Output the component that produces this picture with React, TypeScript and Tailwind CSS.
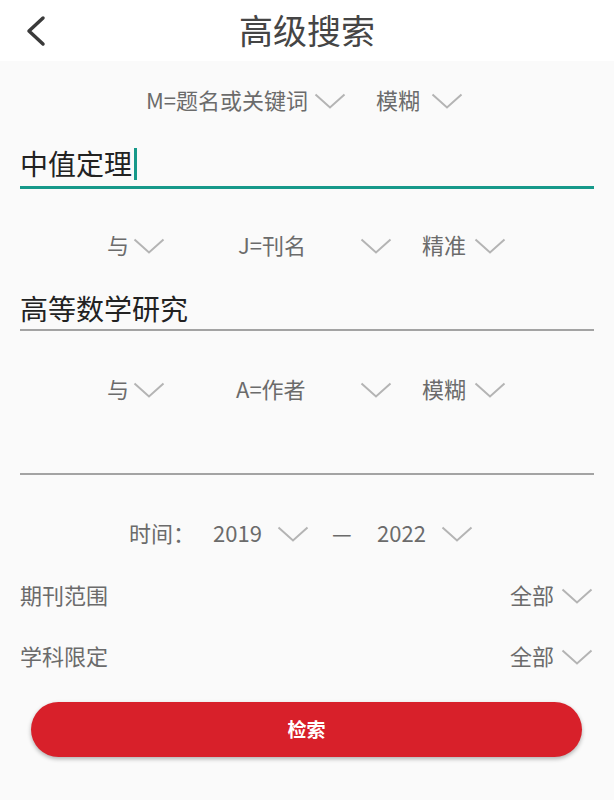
import React from "react";

const FONT = { fontFamily: '"Noto Sans CJK SC", "Noto Sans", sans-serif' };

function Chevron() {
  return (
    <svg width="32" height="16" viewBox="0 0 32 16" className="shrink-0">
      <polyline points="1.5,1.5 16,14.5 30.5,1.5" fill="none" stroke="#b4b4b4" strokeWidth="2" />
    </svg>
  );
}

export default function App() {
  return (
    <div className="w-[614px] h-[800px] bg-[#fafafa] flex flex-col" style={FONT}>
      {/* header */}
      <div className="h-[61px] bg-white flex items-center relative shrink-0">
        <svg width="24" height="34" viewBox="0 0 24 34" className="ml-[24px]">
          <polyline points="19,4 5,17 19,30" fill="none" stroke="#3a3a3a" strokeWidth="3.5" strokeLinecap="round" strokeLinejoin="round" />
        </svg>
        <div className="absolute left-0 right-0 top-0 h-[61px] pb-[2px] flex items-center justify-center text-[34px] text-[#454545] leading-none pointer-events-none">
          高级搜索
        </div>
      </div>

      {/* row 1 */}
      <div className="mt-[20px] h-[40px] flex items-center pl-[146px] text-[22px] text-[#6b6b6b] leading-none">
        <div className="w-[168px] pb-[4px]">M=题名或关键词</div>
        <Chevron />
        <div className="ml-[30px] w-[55px] pb-[4px]">模糊</div>
        <Chevron />
      </div>

      {/* input 1 */}
      <div className="mx-[20px] h-[68px] border-b-[3px] border-[#16998a] flex items-end pb-[2px]">
        <div className="h-[40px] flex items-center text-[28px] text-[#222] leading-none">
          <span className="pb-[3px]">中值定理</span>
          <span className="ml-[2px] w-[3px] h-[32px] bg-[#16998a]" />
        </div>
      </div>

      {/* row 2 */}
      <div className="mt-[37px] h-[40px] flex items-center pl-[107px] text-[22px] text-[#6b6b6b] leading-none">
        <div className="w-[26px] pb-[4px]">与</div>
        <Chevron />
        <div className="ml-[73px] w-[122px] pb-[4px]">J=刊名</div>
        <Chevron />
        <div className="ml-[30px] w-[52px] pb-[4px]">精准</div>
        <Chevron />
      </div>

      {/* input 2 */}
      <div className="mx-[20px] h-[65px] border-b-[2px] border-[#a3a3a3] flex items-end">
        <div className="h-[40px] pb-[3px] flex items-center text-[28px] text-[#222] leading-none">高等数学研究</div>
      </div>

      {/* row 3 */}
      <div className="mt-[39px] h-[40px] flex items-center pl-[107px] text-[22px] text-[#6b6b6b] leading-none">
        <div className="w-[26px] pb-[4px]">与</div>
        <Chevron />
        <div className="ml-[71px] w-[124px] pb-[4px]">A=作者</div>
        <Chevron />
        <div className="ml-[30px] w-[52px] pb-[4px]">模糊</div>
        <Chevron />
      </div>

      {/* input 3 */}
      <div className="mx-[20px] h-[65px] border-b-[2px] border-[#a3a3a3]" />

      {/* time row */}
      <div className="mt-[39px] h-[40px] flex items-center pl-[129px] text-[22px] text-[#6b6b6b] leading-none">
        <div className="w-[84px] pb-[4px]">时间：</div>
        <div className="w-[64px] pb-[4px]">2019</div>
        <Chevron />
        <div className="ml-[23px] w-[45px] pb-[4px]">—</div>
        <div className="w-[64px] pb-[4px]">2022</div>
        <Chevron />
      </div>

      {/* journal range */}
      <div className="mt-[22px] h-[40px] flex items-center justify-between pl-[20px] pr-[21px] text-[22px] text-[#6b6b6b] leading-none">
        <div className="pb-[4px]">期刊范围</div>
        <div className="flex items-center">
          <div className="w-[51px] pb-[4px]">全部</div>
          <Chevron />
        </div>
      </div>

      {/* subject */}
      <div className="mt-[21px] h-[40px] flex items-center justify-between pl-[20px] pr-[21px] text-[22px] text-[#6b6b6b] leading-none">
        <div className="pb-[4px]">学科限定</div>
        <div className="flex items-center">
          <div className="w-[51px] pb-[4px]">全部</div>
          <Chevron />
        </div>
      </div>

      {/* button */}
      <div className="mt-[25px] ml-[31px] mr-[32px]">
        <button className="w-full h-[55px] pb-[3px] rounded-full bg-[#d8202a] text-white text-[19px] font-bold leading-none shadow-[0_2px_4px_rgba(0,0,0,0.3)] flex items-center justify-center" style={FONT}>
          检索
        </button>
      </div>
    </div>
  );
}
